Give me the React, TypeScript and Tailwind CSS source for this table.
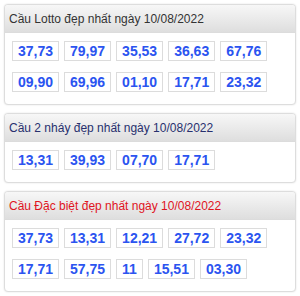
import React from "react";

type Panel = { title: string; color: string; nums: string[] };

const panels: Panel[] = [
  {
    title: "Cầu Lotto đẹp nhất ngày 10/08/2022",
    color: "text-[#333333]",
    nums: ["37,73", "79,97", "35,53", "36,63", "67,76", "09,90", "69,96", "01,10", "17,71", "23,32"],
  },
  {
    title: "Cầu 2 nháy đẹp nhất ngày 10/08/2022",
    color: "text-[#28306e]",
    nums: ["13,31", "39,93", "07,70", "17,71"],
  },
  {
    title: "Cầu Đặc biệt đẹp nhất ngày 10/08/2022",
    color: "text-[#e0141e]",
    nums: ["37,73", "13,31", "12,21", "27,72", "23,32", "17,71", "57,75", "11", "15,51", "03,30"],
  },
];

export default function App() {
  return (
    <div
      className="w-[300px] h-[296px] bg-white px-[4px] pt-[4px] flex flex-col gap-[8px]"
      style={{ fontFamily: '"Liberation Sans", Arial, sans-serif' }}
    >
      {panels.map((p) => (
        <div
          key={p.title}
          className="border border-[#dddddd] rounded-[4px] bg-white overflow-hidden shadow-[0_0_2px_rgba(0,0,0,0.12)]"
        >
          <div
            className={`h-[28px] flex items-center pl-[4px] text-[12px] leading-[14px] border-b border-[#dcdcdc] bg-gradient-to-b from-[#f7f7f7] to-[#dedede] ${p.color}`}
          >
            {p.title}
          </div>
          <div className="flex flex-wrap gap-x-[5px] gap-y-[11px] pl-[7px] pt-[8px] pb-[12px]">
            {p.nums.map((n, i) => (
              <div
                key={i}
                className="h-[20px] px-[5px] border border-[#dcdcdc] bg-white text-[14px] leading-[18px] font-bold text-[#2b54f0] flex items-center"
              >
                {n}
              </div>
            ))}
          </div>
        </div>
      ))}
    </div>
  );
}
